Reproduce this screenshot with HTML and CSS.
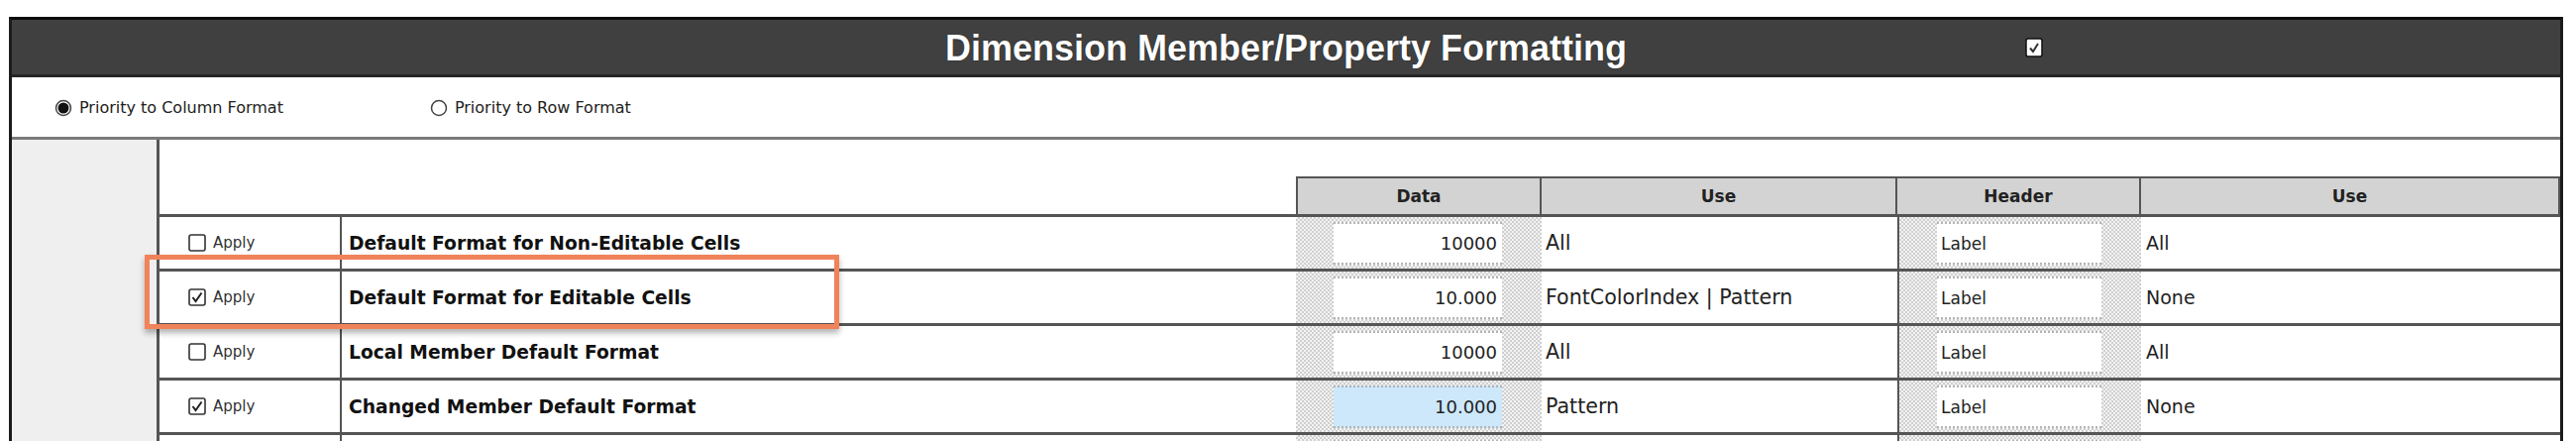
FILE: index.html
```html
<!DOCTYPE html>
<html>
<head>
<meta charset="utf-8">
<link rel="stylesheet" href="styles.css">
</head>
<body>
<div class="frame">
  <div class="titlebar">
    <div></div>
    <div class="title">Dimension Member/Property Formatting</div>
    <div class="title-side">
      <svg class="hcheck" width="18" height="20" viewBox="0 0 18 20"><rect x="1" y="1" width="16" height="18" rx="2" fill="#fff" stroke="#111" stroke-width="1.5"/><path d="M5 10.5 L8 14 L13 6" fill="none" stroke="#333" stroke-width="2"/></svg>
    </div>
  </div>
  <div class="radiorow">
    <label class="radio"><svg width="18" height="18" viewBox="0 0 18 18"><circle cx="9" cy="9" r="7.5" fill="#fff" stroke="#444" stroke-width="1.5"/><circle cx="9" cy="9" r="5.5" fill="#111"/></svg><span>Priority to Column Format</span></label>
    <label class="radio second"><svg width="18" height="18" viewBox="0 0 18 18"><circle cx="9" cy="9" r="7.5" fill="#fff" stroke="#444" stroke-width="1.5"/></svg><span>Priority to Row Format</span></label>
  </div>
  <div class="main">
    <div class="side"></div>
    <div class="tblwrap">
      <div class="tbl">
        <div class="spacer"></div>
        <div class="hblank"></div>
        <div class="hcell first">Data</div>
        <div class="hcell">Use</div>
        <div class="hcell">Header</div>
        <div class="hcell">Use</div>

        <div class="c apply"><svg class="cb" width="18" height="18" viewBox="0 0 18 18"><rect x="1" y="1" width="16" height="16" rx="2" fill="#fff" stroke="#333" stroke-width="1.6"/></svg><span>Apply</span></div>
        <div class="c lbl">Default Format for Non-Editable Cells</div>
        <div class="c pat"><div class="box num">10000</div></div>
        <div class="c use">All</div>
        <div class="c pat hdr"><div class="box txt">Label</div></div>
        <div class="c use2">All</div>

        <div class="c apply"><svg class="cb" width="18" height="18" viewBox="0 0 18 18"><rect x="1" y="1" width="16" height="16" rx="2" fill="#fff" stroke="#333" stroke-width="1.6"/><path d="M4.5 9 L7.5 13 L13.5 4.5" fill="none" stroke="#222" stroke-width="2"/></svg><span>Apply</span></div>
        <div class="c lbl">Default Format for Editable Cells</div>
        <div class="c pat"><div class="box num">10.000</div></div>
        <div class="c use">FontColorIndex | Pattern</div>
        <div class="c pat hdr"><div class="box txt">Label</div></div>
        <div class="c use2">None</div>

        <div class="c apply"><svg class="cb" width="18" height="18" viewBox="0 0 18 18"><rect x="1" y="1" width="16" height="16" rx="2" fill="#fff" stroke="#333" stroke-width="1.6"/></svg><span>Apply</span></div>
        <div class="c lbl">Local Member Default Format</div>
        <div class="c pat"><div class="box num">10000</div></div>
        <div class="c use">All</div>
        <div class="c pat hdr"><div class="box txt">Label</div></div>
        <div class="c use2">All</div>

        <div class="c apply"><svg class="cb" width="18" height="18" viewBox="0 0 18 18"><rect x="1" y="1" width="16" height="16" rx="2" fill="#fff" stroke="#333" stroke-width="1.6"/><path d="M4.5 9 L7.5 13 L13.5 4.5" fill="none" stroke="#222" stroke-width="2"/></svg><span>Apply</span></div>
        <div class="c lbl">Changed Member Default Format</div>
        <div class="c pat"><div class="box num sel">10.000</div></div>
        <div class="c use">Pattern</div>
        <div class="c pat hdr"><div class="box txt">Label</div></div>
        <div class="c use2">None</div>

        <div class="c apply"></div>
        <div class="c lbl"></div>
        <div class="c pat"><div class="box num"></div></div>
        <div class="c use"></div>
        <div class="c pat hdr"><div class="box txt"></div></div>
        <div class="c use2"></div>
      </div>
      <div class="highlight"></div>
    </div>
  </div>
</div>
</body>
</html>
```

FILE: styles.css
```css
html, body {
  margin: 0;
  padding: 0;
  background: #fff;
  overflow: hidden;
}
body {
  font-family: "DejaVu Sans", Verdana, sans-serif;
  color: #1a1a1a;
}
.frame {
  margin: 17px 0 0 9px;
  width: 2572px;
  border-left: 3px solid #1c1c1c;
  border-right: 3px solid #1c1c1c;
  border-top: 3px solid #0c0c0c;
  height: 500px;
}
.titlebar {
  height: 58px;
  box-sizing: border-box;
  background: #404040;
  border-bottom: 3px solid #262626;
  display: grid;
  grid-template-columns: 1fr auto 1fr;
  align-items: center;
}
.title {
  font-family: "Liberation Sans", Arial, sans-serif;
  font-weight: bold;
  font-size: 36px;
  color: #fff;
  text-shadow: 0 0 1px #000;
  padding-top: 2px;
}
.title-side {
  padding-left: 402px;
  display: flex;
  align-items: center;
}
.hcheck { display: block; }
.radiorow {
  height: 63px;
  box-sizing: border-box;
  border-bottom: 3px solid #7a7a7a;
  display: flex;
  align-items: center;
  padding-left: 43px;
  padding-top: 1px;
}
.radio {
  display: flex;
  align-items: center;
  gap: 7px;
  font-size: 16px;
  color: #222;
}
.radio svg { display: block; }
.radio.second { margin-left: 148px; }
.main {
  display: flex;
  height: 400px;
}
.side {
  width: 146px;
  background: #efefef;
  border-right: 3px solid #555;
  flex: none;
}
.tblwrap {
  position: relative;
  flex: 1;
}
.tbl {
  display: grid;
  grid-template-columns: 182px 965px 248px 359px 246px 1fr;
  grid-auto-rows: 55px;
  grid-template-rows: 37px 41px;
}
.spacer { grid-column: 1 / -1; }
.hblank {
  grid-column: 1 / 3;
  border-bottom: 3px solid #555;
}
.hcell {
  background: #d3d3d3;
  border-top: 2px solid #555;
  border-bottom: 3px solid #555;
  border-right: 2px solid #555;
  font-weight: bold;
  font-size: 17px;
  color: #222;
  display: flex;
  align-items: center;
  justify-content: center;
}
.hcell:last-child { border-right: none; }
.hcell.first { border-left: 2px solid #555; }
.c {
  box-sizing: border-box;
  border-bottom: 3px solid #555;
  display: flex;
  align-items: center;
  min-width: 0;
  white-space: nowrap;
}
.apply {
  padding-left: 29px;
  gap: 7px;
  font-size: 15px;
  color: #333;
}
.cb { display: block; }
.lbl {
  border-left: 2px solid #555;
  padding-left: 7px;
  font-weight: bold;
  font-size: 18.7px;
  color: #111;
}
.pat {
  background-color: #e4e4e4;
  background-image: repeating-conic-gradient(#cfcfcf 0 25%, #f3f3f3 0 50%);
  background-size: 4px 4px;
  align-items: stretch;
  padding: 5px 40px 4px 38px;
}
.hdr {
  border-left: 2px solid #555;
  padding: 5px 40px 4px 38px;
}
.box {
  flex: 1;
  background: #fff;
  border-top: 2px dotted #b5b5b5;
  border-bottom: 2px dotted #b5b5b5;
  display: flex;
  align-items: center;
  font-size: 18px;
  color: #222;
}
.box.num {
  justify-content: flex-end;
  padding-right: 5px;
}
.box.txt {
  padding-left: 4px;
  font-size: 17px;
}
.box.sel { background: #cde8fb; }
.use {
  padding-left: 4px;
  font-size: 20.6px;
  color: #222;
}
.use2 {
  padding-left: 5px;
  font-size: 19px;
  color: #222;
}
.highlight {
  position: absolute;
  left: -15px;
  top: 116px;
  width: 701px;
  height: 75px;
  box-sizing: border-box;
  border: 5px solid #f0835a;
  box-shadow: 0 4px 6px rgba(0, 0, 0, 0.3);
  pointer-events: none;
}
```
